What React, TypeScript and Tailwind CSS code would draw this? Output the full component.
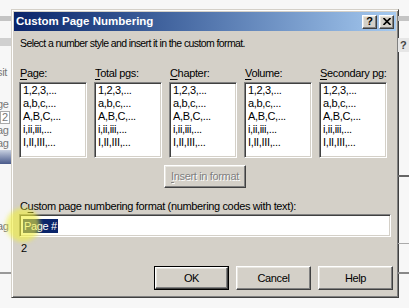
import React from 'react';

const styles = ['Page:', 'Total pgs:', 'Chapter:', 'Volume:', 'Secondary pg:'];
const accel = ['P', 'T', 'C', 'V', 'S'];
const items = ['1,2,3,...', 'a,b,c,...', 'A,B,C,...', 'i,ii,iii,...', 'I,II,III,...'];

const raised =
  'border border-t-white border-l-white border-b-[#404040] border-r-[#404040] shadow-[inset_-1px_-1px_0_#808080,inset_1px_1px_0_#e8e6e0]';
const sunken =
  'border border-t-[#808080] border-l-[#808080] border-b-white border-r-white shadow-[inset_1px_1px_0_#404040,inset_-1px_-1px_0_#d4d0c8]';

const Label = ({ text, k }: { text: string; k: string }) => {
  const i = text.indexOf(k);
  return (
    <span>
      {text.slice(0, i)}
      <span className="underline underline-offset-2">{k}</span>
      {text.slice(i + 1)}
    </span>
  );
};

const App = () => {
  return (
    <div
      className="relative w-[409px] h-[308px] overflow-hidden bg-[#f7f7f7] text-[11px] leading-[13px] tracking-[-0.35px] text-black"
      style={{ fontFamily: '"Liberation Sans", Arial, sans-serif' }}
    >
      {/* bits of the window behind */}
      <div className="absolute left-0 top-[16px] w-[11px] h-[5px] bg-[#c4c4c4]" />
      <div className="absolute left-0 top-[38px] w-[11px] h-[8px] bg-[#d0d0d0]" />
      <div className="absolute left-0 top-[66px] text-[#777] -ml-[3px]">sit</div>
      <div className="absolute left-0 top-[98px] text-[#777] -ml-[3px]">ge</div>
      <div className="absolute left-0 top-[111px] h-[13px] w-[10px] bg-white border border-[#aaa] text-[#777] leading-[11px] pl-[1px]">2</div>
      <div className="absolute left-0 top-[124px] text-[#777] -ml-[3px]">ag</div>
      <div className="absolute left-0 top-[137px] text-[#777] -ml-[3px]">ag</div>
      <div className="absolute left-0 top-[150px] w-[11px] h-[14px] bg-gradient-to-b from-[#c8d0e0] to-[#4a5a8a]" />
      <div className="absolute left-0 top-[220px] text-[#777] -ml-[3px]">ag</div>
      <div className="absolute left-0 top-[272px] w-[11px] h-[2px] bg-[#999]" />
      <div className="absolute right-0 top-[16px] w-[11px] h-[5px] bg-[#c4c4c4]" />
      <div className="absolute right-0 top-[38px] w-[11px] h-[14px] bg-[#e6e6e6] font-bold text-[#444] leading-[14px] pl-[2px]">?</div>
      <div className="absolute right-0 top-[175px] w-[11px] h-[2px] bg-[#666]" />
      <div className="absolute right-0 top-[243px] w-[11px] h-[1px] bg-[#aaa]" />
      <div className="absolute right-0 top-[272px] w-[11px] h-[2px] bg-[#888]" />

      <div className="pl-[11px] pt-[9px]">
        <div className="w-[388px] h-[289px] bg-[#d4d0c8] border border-t-[#d4d0c8] border-l-[#d4d0c8] border-b-[#404040] border-r-[#404040] shadow-[inset_1px_1px_0_#fff,inset_-1px_-1px_0_#808080] p-[2px] flex flex-col">
          <div className="h-[19px] flex items-center justify-between bg-gradient-to-r from-[#0a246a] to-[#a6caf0] pl-[2px] pr-[2px]">
            <span className="text-white font-bold text-[11.5px] tracking-normal">Custom Page Numbering</span>
            <div className="flex gap-[2px]">
              <div className={`${raised} w-[15px] h-[14px] bg-[#d4d0c8] flex items-center justify-center font-bold leading-none tracking-normal`}>?</div>
              <div className={`${raised} w-[15px] h-[14px] bg-[#d4d0c8] flex items-center justify-center`}>
                <svg width="8" height="7" viewBox="0 0 8 7">
                  <path d="M0.5 0L7.5 7M7.5 0L0.5 7" stroke="#000" strokeWidth="1.6" fill="none" />
                </svg>
              </div>
            </div>
          </div>

          <div className="px-[5px] pt-[6px] flex flex-col">
            <div className="pl-[1px] text-[10.5px] tracking-[-0.6px]">
              Select a number style and insert it in the custom format.
            </div>

            <div className="mt-[17px] flex gap-[7px]">
              {styles.map((s, i) => (
                <div key={s} className="w-[68px] flex flex-col">
                  <div className="pl-[1px] h-[13px] whitespace-nowrap">
                    <Label text={s} k={accel[i]} />
                  </div>
                  <div className={`${sunken} mt-[2px] h-[76px] bg-white pl-[3px] pt-[1px]`}>
                    {items.map((it) => (
                      <div key={it}>{it}</div>
                    ))}
                  </div>
                </div>
              ))}
            </div>

            <div className="mt-[7px] flex justify-center">
              <div className={`${raised} w-[82px] h-[23px] flex items-center justify-center text-[#808080] [text-shadow:1px_1px_0_#fff] whitespace-nowrap`}>
                <span>
                  <span className="underline underline-offset-2">I</span>nsert in format
                </span>
              </div>
            </div>

            <div className="mt-[12px] pl-[1px]">
              C<span className="underline underline-offset-2">u</span>stom page numbering format (numbering codes with text):
            </div>
            <div className={`${sunken} mt-[1px] h-[23px] bg-white flex items-center pl-[3px]`}>
              <span className="bg-[#0a246a] text-white px-[1px] leading-[14px]">Page #</span>
            </div>
            <div className="mt-[5px] pl-[2px]">2</div>

            <div className="mt-[11px] flex justify-end gap-[7px] -mr-[2px]">
              <div className="border border-black">
                <div className={`${raised} w-[73px] h-[22px] flex items-center justify-center`}>OK</div>
              </div>
              <div className={`${raised} w-[75px] h-[24px] flex items-center justify-center`}>Cancel</div>
              <div className={`${raised} w-[75px] h-[24px] flex items-center justify-center`}>Help</div>
            </div>
          </div>
        </div>
      </div>

      {/* cursor highlight */}
      <div className="absolute left-[6px] top-[208px] w-[34px] h-[34px] rounded-full bg-[#f2f03a]/60 blur-[2px]" />
    </div>
  );
};

export default App;
